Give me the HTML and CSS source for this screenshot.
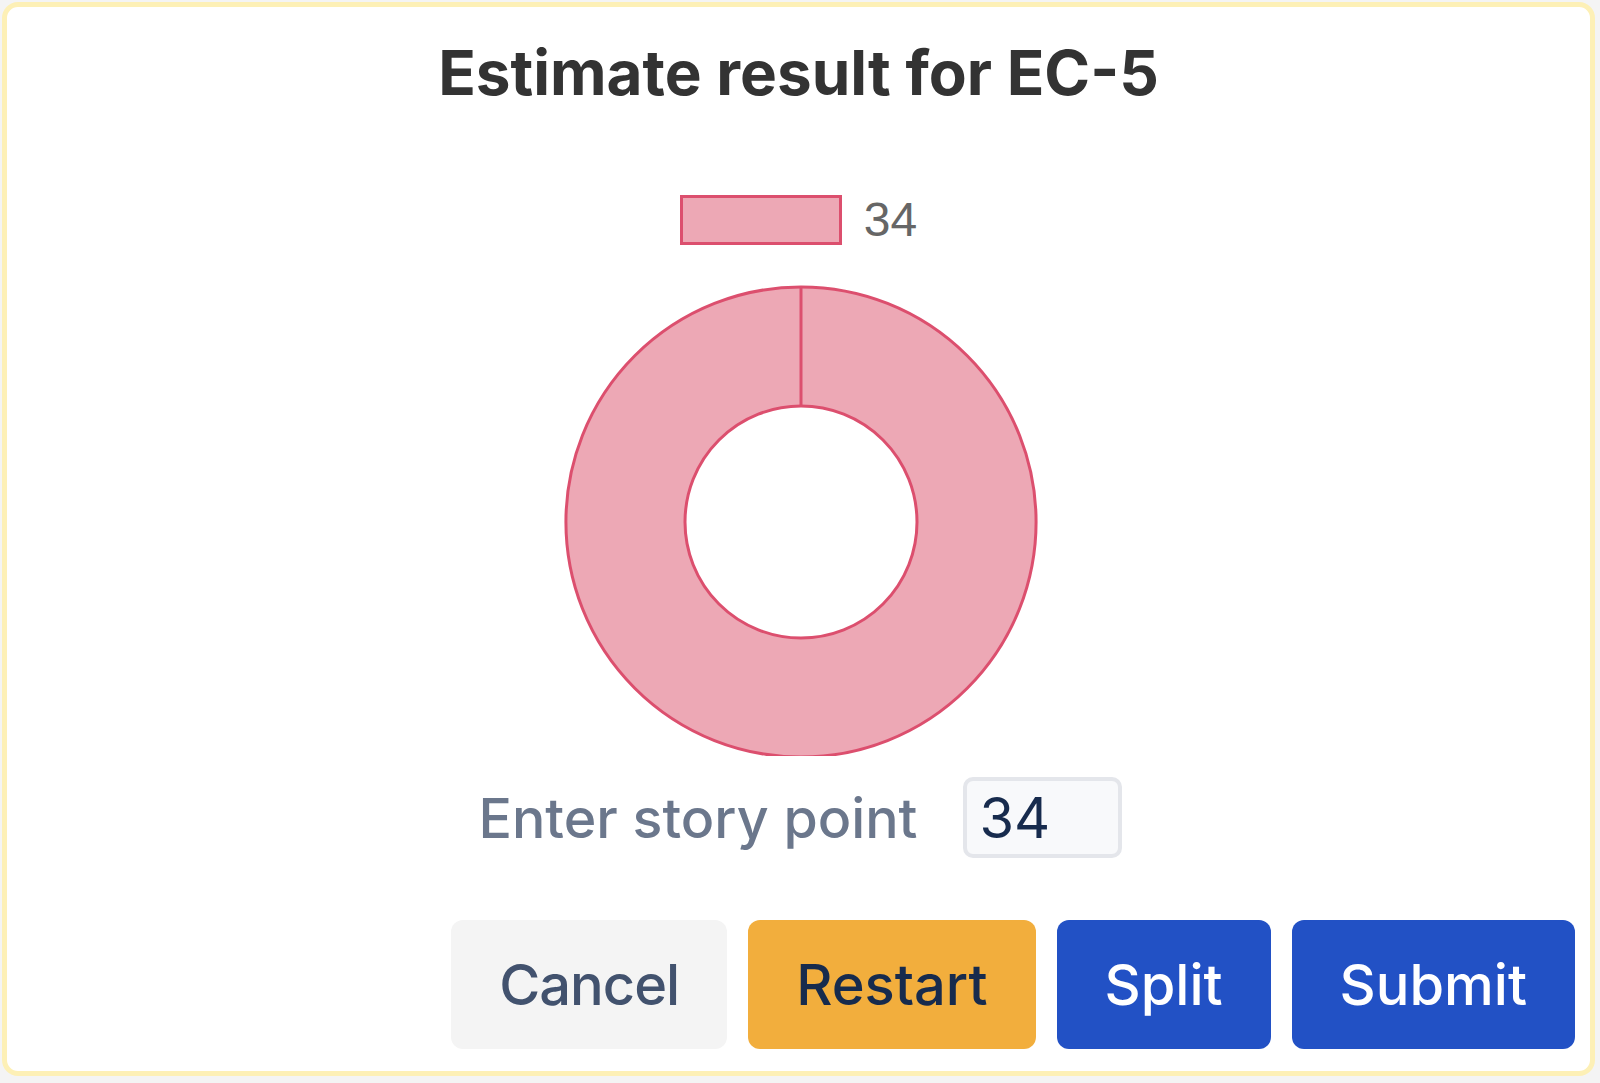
FILE: index.html
```html
<!DOCTYPE html>
<html lang="en">
<head>
    <meta charset="UTF-8">
    <meta name="viewport" content="width=device-width, initial-scale=1.0">
    <title>Estimate result</title>
    <link rel="stylesheet" href="styles.css">
</head>
<body>
    <div class="modal">
        <h2 class="title">Estimate result for EC-5</h2>

        <div class="legend">
            <span class="swatch"></span>
            <span class="legend-label">34</span>
        </div>

        <svg class="donut" width="480" height="471" viewBox="-240 -237 480 471">
            <path d="M 0 -235 A 235 235 0 1 1 0 235 A 235 235 0 1 1 0 -235 Z M 0 -116 A 116 116 0 1 0 0 116 A 116 116 0 1 0 0 -116 Z"
                  fill="#eda8b5" fill-rule="evenodd" stroke="#dc4f6e" stroke-width="3"/>
            <line x1="0" y1="-235" x2="0" y2="-116" stroke="#dc4f6e" stroke-width="3"/>
        </svg>

        <div class="point-row">
            <label for="points">Enter story point</label>
            <input type="text" id="points" name="points" value="34">
        </div>

        <div class="actions">
            <button class="btn btn-cancel">Cancel</button>
            <button class="btn btn-restart">Restart</button>
            <button class="btn btn-primary">Split</button>
            <button class="btn btn-primary">Submit</button>
        </div>
    </div>
</body>
</html>
```

FILE: styles.css
```css
body {
    margin: 0;
    background-color: #f4f4f4;
    font-family: Inter, "Noto Sans", sans-serif;
}

.modal {
    margin: 2px;
    width: 1593px;
    height: 1074px;
    box-sizing: border-box;
    border: 5px solid #fdf0b6;
    border-radius: 16px;
    background: #fff;
    display: flex;
    flex-direction: column;
    align-items: center;
}

.title {
    margin: 27px 0 0;
    font-size: 62px;
    line-height: 78px;
    font-weight: 700;
    color: #333;
}

.legend {
    margin-top: 80px;
    display: flex;
    align-items: center;
    gap: 22px;
}

.swatch {
    width: 162px;
    height: 50px;
    box-sizing: border-box;
    border: 3px solid #dc4f6e;
    background: #eda8b5;
}

.legend-label {
    font-family: "Liberation Sans", Arial, sans-serif;
    font-size: 48px;
    color: #666;
}

.donut {
    display: block;
    margin: 38px 0 0 4px;
}

.point-row {
    margin-top: 21px;
    margin-left: 4px;
    display: flex;
    align-items: center;
    gap: 46px;
}

.point-row label {
    font-size: 55.5px;
    font-weight: 500;
    color: #6b778c;
}

.point-row input {
    width: 159px;
    height: 81px;
    box-sizing: border-box;
    padding: 0 0 0 12px;
    border: 4px solid #e4e6eb;
    border-radius: 10px;
    background: #f8f9fb;
    font-family: Inter, "Noto Sans", sans-serif;
    font-size: 56px;
    color: #172b4d;
}

.actions {
    margin-top: 62px;
    align-self: stretch;
    padding-right: 15px;
    display: flex;
    justify-content: flex-end;
    gap: 21px;
}

.btn {
    height: 129px;
    padding: 0 48px;
    border: none;
    border-radius: 12px;
    font-family: Inter, "Noto Sans", sans-serif;
    font-size: 56px;
    font-weight: 500;
    cursor: pointer;
}

.btn-cancel {
    background-color: #f4f4f4;
    color: #42526e;
    letter-spacing: -1px;
}

.btn-restart {
    background-color: #f2ae3d;
    color: #172b4d;
}

.btn-primary {
    background-color: #2251c5;
    color: #fff;
}
```
